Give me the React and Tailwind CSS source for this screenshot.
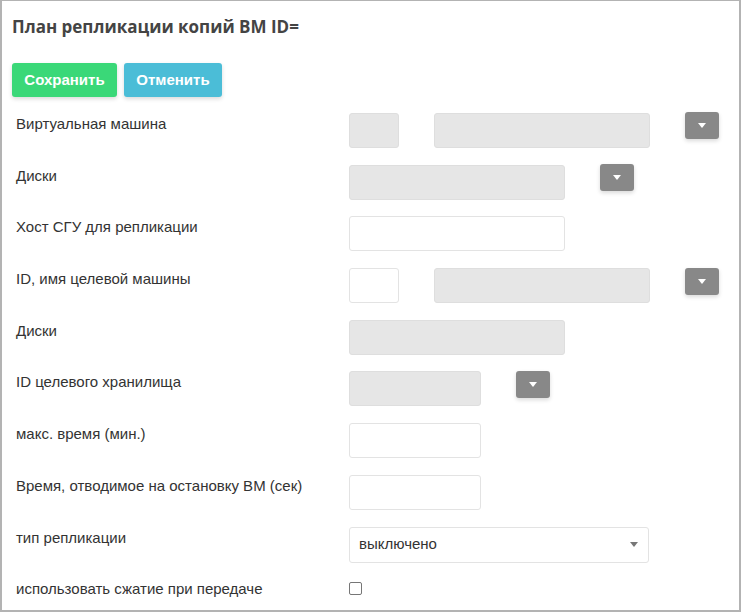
import React from 'react';

const Caret = ({ color = '#fff' }) => (
  <svg width="8" height="5" viewBox="0 0 8 5">
    <path d="M0 0 L8 0 L4 5 Z" fill={color} />
  </svg>
);

const DropBtn = () => (
  <button className="w-[34px] h-[27px] bg-[#888888] rounded-[3px] flex items-center justify-center shadow-[0_2px_4px_rgba(0,0,0,0.15)]">
    <Caret />
  </button>
);

const Gray = ({ w }) => (
  <div className={`${w} h-[35px] bg-[#e6e6e6] border border-[#dedede] rounded-[3px]`} />
);

const White = ({ w }) => (
  <div className={`${w} h-[35px] bg-white border border-[#e3e3e3] rounded-[3px]`} />
);

export default function App() {
  const rows = [
    {
      label: 'Виртуальная машина',
      field: (
        <div className="flex items-start">
          <Gray w="w-[50px]" />
          <div className="ml-[35px]"><Gray w="w-[216px]" /></div>
          <div className="ml-[35px] -mt-[1px]"><DropBtn /></div>
        </div>
      ),
    },
    {
      label: 'Диски',
      field: (
        <div className="flex items-start">
          <Gray w="w-[216px]" />
          <div className="ml-[35px] -mt-[1px]"><DropBtn /></div>
        </div>
      ),
    },
    { label: 'Хост СГУ для репликации', field: <White w="w-[216px]" /> },
    {
      label: 'ID, имя целевой машины',
      field: (
        <div className="flex items-start">
          <White w="w-[50px]" />
          <div className="ml-[35px]"><Gray w="w-[216px]" /></div>
          <div className="ml-[35px]"><DropBtn /></div>
        </div>
      ),
    },
    { label: 'Диски', field: <Gray w="w-[216px]" /> },
    {
      label: 'ID целевого хранилища',
      field: (
        <div className="flex items-start">
          <Gray w="w-[132px]" />
          <div className="ml-[35px]"><DropBtn /></div>
        </div>
      ),
    },
    { label: 'макс. время (мин.)', field: <White w="w-[132px]" /> },
    { label: 'Время, отводимое на остановку ВМ (сек)', field: <White w="w-[132px]" /> },
    {
      label: 'тип репликации',
      field: (
        <div className="w-[300px] h-[36px] bg-white border border-[#e3e3e3] rounded-[3px] flex items-center justify-between pl-[9px] pr-[10px]">
          <span className="text-[15px] text-[#333]">выключено</span>
          <Caret color="#777" />
        </div>
      ),
    },
  ];

  return (
    <div className="w-[741px] h-[612px] bg-white border-x-2 border-b-2 border-t border-[#b3b3b3] font-['Liberation_Sans',Arial,sans-serif] text-[#333] overflow-hidden">
      <h1 className="pl-[10px] pt-[15px] text-[17px] leading-[22px] font-bold text-[#444] font-['Open_Sans',sans-serif]">
        План репликации копий ВМ ID=
      </h1>
      <div className="flex gap-[7px] pl-[10px] mt-[25px]">
        <button className="w-[105px] h-[34px] bg-[#3ad878] text-white font-bold text-[15px] rounded-[3px] shadow-[0_2px_4px_rgba(0,0,0,0.15)]">
          Сохранить
        </button>
        <button className="w-[98px] h-[34px] bg-[#4bbdd7] text-white font-bold text-[15px] rounded-[3px] shadow-[0_2px_4px_rgba(0,0,0,0.15)]">
          Отменить
        </button>
      </div>
      <div className="mt-[16px] pl-[14px]">
        {rows.map((r, i) => (
          <div key={i} className="flex h-[51.7px]">
            <div className="w-[333px] text-[15px] leading-5 pt-[1px]">{r.label}</div>
            <div>{r.field}</div>
          </div>
        ))}
        <div className="flex">
          <div className="w-[333px] text-[15px] leading-5 pt-[1px]">использовать сжатие при передаче</div>
          <div className="pt-[4px]">
            <div className="w-[13px] h-[13px] border border-[#767676] rounded-[2px] bg-white" />
          </div>
        </div>
      </div>
    </div>
  );
}
